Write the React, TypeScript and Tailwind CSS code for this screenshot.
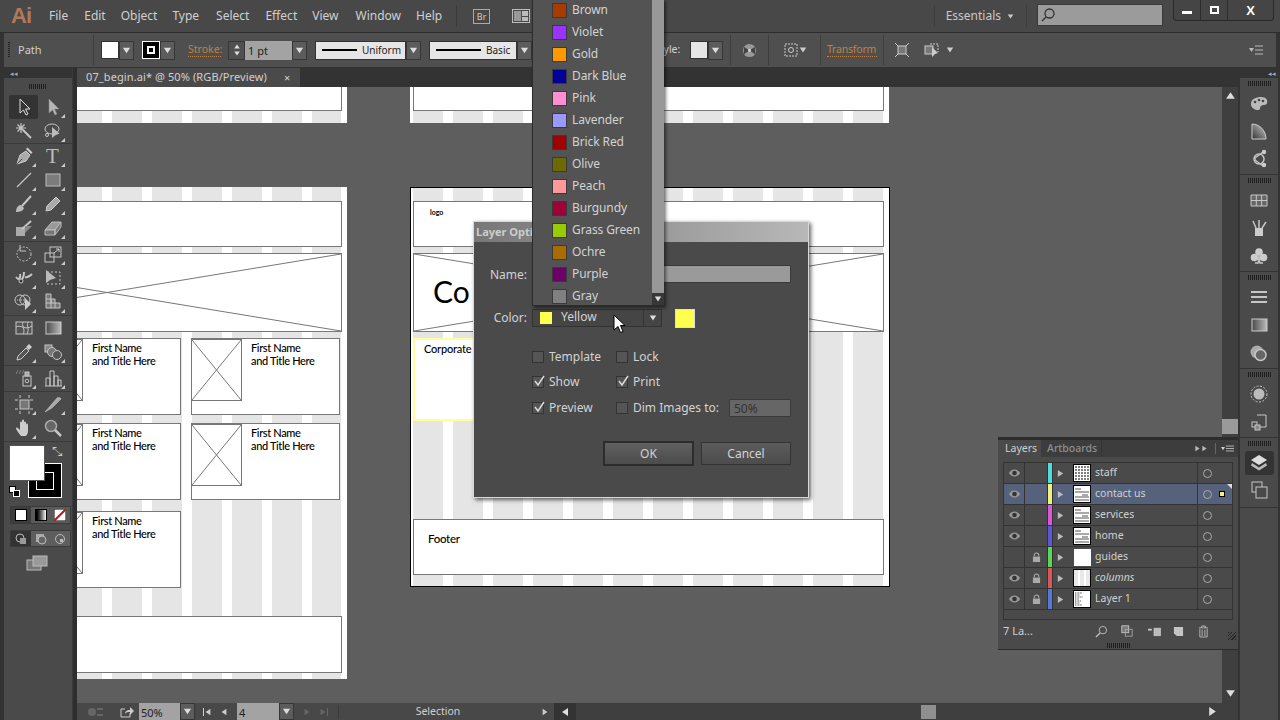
import React from 'react';

const UI = "font-['Noto_Sans',sans-serif]";

const Tri = ({ dir = 'down', className = 'w-2 h-2 text-[#ddd]' }: { dir?: 'down' | 'up' | 'left' | 'right'; className?: string }) => {
  const pts = { down: '1,2 9,2 5,8', up: '1,8 9,8 5,2', left: '8,1 8,9 2,5', right: '2,1 2,9 8,5' }[dir];
  return (
    <svg viewBox="0 0 10 10" className={`shrink-0 ${className}`}>
      <polygon points={pts} fill="currentColor" />
    </svg>
  );
};

const Drop = ({ className = 'w-[15px] h-[19px]' }: { className?: string }) => (
  <div className={`flex items-center justify-center bg-[#5c5c5c] border border-[#363636] shrink-0 ${className}`}>
    <Tri className="w-[9px] h-[9px] text-[#ddd]" />
  </div>
);

const Sep = ({ className = '' }: { className?: string }) => <div className={`w-px h-[30px] bg-[#3d3d3d] shrink-0 ${className}`} />;

const Grip = ({ w = 'w-[23px]' }: { w?: string }) => (
  <div className={`h-[5px] ${w} bg-[repeating-linear-gradient(90deg,#1f1f1f_0,#1f1f1f_1px,transparent_1px,transparent_2px)]`} />
);

// tool and panel icons, 20x20
const icons: Record<string, React.ReactNode> = {
  select: <path d="M6 2v14l3.5-3 2.5 5 2-1-2.5-5H16z" fill="#333" stroke="#ddd" />,
  direct: <path d="M6 2v14l3.5-3 2.5 5 2-1-2.5-5H16z" fill="#b5b5b5" stroke="#888" strokeWidth=".5" />,
  wand: <><path d="M9 9l8 8" strokeWidth="2" /><path d="M7 2v10M2 7h10M3.5 3.5l7 7M10.5 3.5l-7 7" strokeWidth="1.2" /></>,
  lasso: <><ellipse cx="9" cy="8" rx="7" ry="5" /><path d="M9 6v11l3-2.5 4.5-2z" fill="#bbb" stroke="none" /><circle cx="4" cy="14" r="1.5" /></>,
  pen: <><path d="M3 18l3-9 6-4 4 4-4 6z" fill="#aaa" stroke="#ccc" /><path d="M3 18l5-5" stroke="#444" /><path d="M12 3l1.5-1.5 5 5L17 8z" fill="#ccc" stroke="none" /></>,
  line: <path d="M3 17L17 3" strokeWidth="1.2" />,
  rect: <rect x="3" y="4" width="14" height="12" fill="#7c7c7c" stroke="#bbb" />,
  brush: <><path d="M8 12l9-10" strokeWidth="2" /><path d="M2 18c0-4 2-7 5-7l3 3c-1 3-4 4-8 4z" fill="#bbb" stroke="none" /></>,
  pencil: <path d="M3 17l1-5 9-9 4 4-9 9z" fill="#aaa" stroke="#ccc" />,
  blob: <><path d="M2 9h9v9H2z" fill="#aaa" stroke="none" /><path d="M8 11l9-8" strokeWidth="2" /><path d="M11 8l7 0-7 7z" fill="#888" stroke="none" /></>,
  eraser: <><path d="M2 12l7-8h9l-6 8z" fill="#999" stroke="#bbb" /><path d="M2 12h10v5H2zM12 12l6-8v5l-6 8z" fill="#777" stroke="#bbb" /></>,
  rotate: <><circle cx="10" cy="10" r="7" strokeDasharray="2 1.5" /><path d="M6 1v6h6" strokeWidth="1" /></>,
  scale: <><rect x="2" y="9" width="9" height="9" /><rect x="7" y="3" width="11" height="10" /><path d="M11 9l5-4M13 5h3v3" /></>,
  warp: <><path d="M2 9c3 4 5 1 4-3M10 4c0 5-2 8-4 9M11 9c3 1 5-1 7-3" strokeWidth="2" /><circle cx="7" cy="13" r="2" fill="#333" /></>,
  free: <><rect x="4" y="4" width="13" height="12" strokeDasharray="2 2" /><path d="M3 2v13l4-3 6-2z" fill="#bbb" stroke="none" /></>,
  shape: <><ellipse cx="6" cy="8" rx="5" ry="5" /><ellipse cx="11" cy="8" rx="5" ry="5" /><path d="M3 8h8" strokeDasharray="1 1" /><path d="M11 6v12l6-6z" fill="#ccc" stroke="none" /></>,
  persp: <path d="M3 2h5v5h4v4h5v5H3zM3 7h5v4h4v5M3 11h5v5M8 7v4" fill="#777" />,
  mesh: <><rect x="2" y="4" width="16" height="12" fill="#555" /><path d="M2 9c5-3 9 4 16-1M9 4c-2 3 3 8 0 12M14 4c-2 4 2 6-1 12" /></>,
  grad: <><defs><linearGradient id="g1"><stop offset="0" stopColor="#4a4a4a" /><stop offset="1" stopColor="#bbb" /></linearGradient></defs><rect x="3" y="4" width="15" height="12" fill="url(#g1)" stroke="#ccc" /></>,
  dropper: <><path d="M3 18l1-4 8-8 3 3-8 8z" stroke="#ccc" fill="#555" /><path d="M12 5l3-3 3 3-3 3z" fill="#ccc" stroke="none" /></>,
  blend: <><rect x="2" y="3" width="7" height="7" fill="#888" /><circle cx="9" cy="10" r="4.5" fill="#777" /><circle cx="14" cy="13" r="4.5" fill="#555" /></>,
  spray: <><path d="M2 5h.5M5 5h.5M8 5h.5M3 3h.5M6 3h.5M9 3h.5" strokeWidth="1.3" /><rect x="9" y="8" width="8" height="10" /><circle cx="13" cy="13" r="1.8" /><rect x="11" y="4" width="4" height="4" fill="#aaa" /></>,
  graph: <path d="M3 18V10h4v8M7 18V3h4v15M11 18V8h4v10M15 18v-6h3v6M2 18h17" />,
  board: <><rect x="6" y="6" width="9" height="9" fill="#777" /><path d="M4 6H1M4 15H1M19 6h-3M19 15h-3M6 4V1M15 4V1M6 20v-3M15 20v-3" /></>,
  slice: <path d="M2 18L14 4c2-1 4 0 4 1l-9 9z" fill="#aaa" stroke="#ccc" strokeWidth=".5" />,
  hand: <path d="M7 18c-2-3-5-6-5-8 1-1 2 0 4 2V5c0-2 2-2 2 0V3c0-2 2-2 2 0v2c0-2 2-2 2 0v2c0-2 2-2 2 0v6c0 2-1 4-2 5z" fill="#ccc" stroke="none" />,
  zoom: <><circle cx="8" cy="8" r="5.5" fill="#666" stroke="#aaa" strokeWidth="1.5" /><path d="M12 12l6 6" strokeWidth="2.5" /></>,
  palette: <><path d="M2 11c0-5 5-7 10-7s7 3 6 6-4 1-6 3 0 4-3 4-7-2-7-6z" fill="#bbb" stroke="none" /><circle cx="6" cy="9" r="1.3" fill="#444" stroke="none" /><circle cx="10" cy="7" r="1.3" fill="#444" stroke="none" /><circle cx="14" cy="8" r="1.3" fill="#444" stroke="none" /></>,
  guide: <><defs><linearGradient id="g2" x1="0" y1="1" x2="1" y2="0"><stop offset="0" stopColor="#333" /><stop offset="1" stopColor="#ccc" /></linearGradient></defs><path d="M3 3c8 0 14 7 14 15H3z" fill="url(#g2)" stroke="#ccc" /></>,
  kuler: <><path d="M14 3L6 9l0 2 8 6" strokeWidth="1.3" /><circle cx="10" cy="10" r="5" strokeWidth="1.5" /><circle cx="15" cy="3" r="2.2" fill="#ccc" stroke="none" /><circle cx="15" cy="16" r="2.2" fill="#ccc" stroke="none" /></>,
  swatches: <path d="M2 5h16v11H2zM2 10.500h16M7.300 5v11M12.600 5v11" fill="#666" />,
  brushes: <><rect x="6" y="10" width="8" height="8" fill="#ccc" stroke="none" /><path d="M7 10L4 3M10 10V2M13 10l4-6" strokeWidth="1.5" /></>,
  club: <><circle cx="10" cy="6" r="3.8" fill="#ccc" stroke="none" /><circle cx="5.500" cy="11.500" r="3.800" fill="#ccc" stroke="none" /><circle cx="14.500" cy="11.500" r="3.800" fill="#ccc" stroke="none" /><path d="M10 9l-1 8H6h8h-3z" fill="#ccc" /></>,
  lines: <path d="M2 5h16M2 10h16M2 15h16" strokeWidth="2.200" />,
  trans: <><circle cx="8" cy="9" r="6.500" fill="#aaa" stroke="none" /><circle cx="11.500" cy="12" r="5.500" fill="#666" strokeWidth="1.500" /></>,
  appear: <><circle cx="10" cy="10" r="8" strokeDasharray="2 1.500" /><circle cx="10" cy="10" r="5.500" fill="#bbb" stroke="none" /></>,
  transform: <><path d="M8 3h9v12H8" strokeWidth="1" /><rect x="3" y="10" width="5" height="5" /><rect x="6" y="13" width="5" height="5" fill="#888" /></>,
  layers: <><path d="M10 2l8 5-8 5-8-5z" fill="#ddd" stroke="none" /><path d="M3 10l7 4.500 7-4.500 1 2.500-8 5-8-5z" fill="#bbb" stroke="none" /></>,
  artboards: <><rect x="3" y="2" width="10" height="10" /><rect x="7" y="7" width="11" height="11" fill="#4a4a4a" /></>,
};

const Ico = ({ name, className = 'w-5 h-5' }: { name: string; className?: string }) => (
  <svg viewBox="0 0 20 20" className={`shrink-0 ${className}`} fill="none" stroke="#c6c6c6" strokeWidth="1">
    {icons[name]}
  </svg>
);

const ToolCell = ({ name, corner = true, active = false }: { name: string; corner?: boolean; active?: boolean }) => (
  <div className={`relative flex items-center justify-center w-[30px] h-[24px] ${active ? 'bg-[#333] rounded-[2px]' : ''}`}>
    {name === 'type' ? (
      <span className="font-['Liberation_Serif',serif] text-[21px] leading-none text-[#bdbdbd]">T</span>
    ) : (
      <Ico name={name} />
    )}
    {corner && (
      <svg viewBox="0 0 4 4" className="absolute right-[2px] bottom-[1px] w-1 h-1">
        <polygon points="4,0 4,4 0,4" fill="#ccc" />
      </svg>
    )}
  </div>
);

const toolGroups: [string, string][][] = [
  [['select', 'direct'], ['wand', 'lasso']],
  [['pen', 'type'], ['line', 'rect'], ['brush', 'pencil'], ['blob', 'eraser']],
  [['rotate', 'scale'], ['warp', 'free'], ['shape', 'persp']],
  [['mesh', 'grad'], ['dropper', 'blend']],
  [['spray', 'graph']],
  [['board', 'slice'], ['hand', 'zoom']],
];
const noCorner = ['select', 'wand', 'grad', 'mesh', 'zoom'];

const Tools = () => (
  <div className="w-[73px] pl-1 bg-[#333] shrink-0 h-full">
    <div className="h-full bg-[#4a4a4a] border-r border-[#3a3a3a]">
      <div className="h-[10px] bg-[#333] flex items-center pl-1.5">
        <span className="text-[7px] leading-none text-[#aaa]">◂◂</span>
      </div>
      <div className="h-[17px] flex justify-center pt-1.5"><Grip w="w-[18px]" /></div>
      {toolGroups.map((rows, g) => (
        <div key={g} className={`border-b border-[#3a3a3a] px-[5px] ${g === 0 ? '' : 'pb-px'}`}>
          {rows.map((r, i) => (
            <div key={i} className="flex">
              {r.map((n) => <ToolCell key={n} name={n} corner={!noCorner.includes(n)} active={n === 'select'} />)}
            </div>
          ))}
        </div>
      ))}
      {/* fill and stroke */}
      <div className="relative h-[60px]">
        <div className="absolute left-[24px] top-[21px] w-[34px] h-[35px] bg-black border border-white flex items-center justify-center">
          <div className="w-[18px] h-[18px] border border-white bg-black" />
        </div>
        <div className="absolute left-[5px] top-[3px] w-[36px] h-[36px] bg-white border border-[#555]" />
        <span className="absolute left-[48px] top-[1px] text-[13px] leading-4 text-[#ccc]">⤡</span>
        <div className="absolute left-[5px] top-[44px] w-[7px] h-[7px] bg-white border border-black" />
        <div className="absolute left-[9px] top-[48px] w-[7px] h-[7px] bg-black border border-white" />
      </div>
      <div className="ml-[6px] mr-[1px] mt-[4px] flex h-[18px] bg-[#3d3d3d] border border-[#3a3a3a]">
        <div className="flex-1 flex items-center justify-center"><div className="w-3 h-3 bg-white border border-black" /></div>
        <div className="flex-1 flex items-center justify-center bg-[#5a5a5a]"><div className="w-3 h-3 bg-gradient-to-r from-black to-white border border-black" /></div>
        <div className="flex-1 flex items-center justify-center bg-[#5a5a5a]">
          <svg viewBox="0 0 12 12" className="w-3 h-3"><rect width="12" height="12" fill="#fff" stroke="#000" /><path d="M0 12L12 0" stroke="#c01818" strokeWidth="2" /></svg>
        </div>
      </div>
      <div className="ml-[6px] mr-[1px] mt-[6px] flex h-[17px] border border-[#3a3a3a]">
        <div className="flex-1 flex items-center justify-center bg-[#333]"><svg viewBox="0 0 12 12" className="w-3 h-3"><circle cx="5" cy="5" r="4" fill="none" stroke="#bbb" /><rect x="5" y="5" width="6" height="6" fill="#999" /></svg></div>
        <div className="flex-1 flex items-center justify-center bg-[#5e5e5e]"><svg viewBox="0 0 12 12" className="w-3 h-3"><rect x="1" y="1" width="8" height="8" fill="#aaa" /><circle cx="7" cy="7" r="4" fill="#666" stroke="#bbb" /></svg></div>
        <div className="flex-1 flex items-center justify-center bg-[#5e5e5e]"><svg viewBox="0 0 12 12" className="w-3 h-3"><circle cx="6" cy="6" r="4.500" fill="none" stroke="#bbb" /><rect x="6" y="6" width="3" height="3" fill="#bbb" /></svg></div>
      </div>
      <div className="flex justify-center mt-[8px] mr-[2px]">
        <svg viewBox="0 0 22 16" className="w-[22px] h-4"><rect x="1" y="5" width="14" height="10" fill="#777" stroke="#bbb" /><rect x="7" y="1" width="14" height="10" fill="#999" stroke="#bbb" /></svg>
      </div>
    </div>
  </div>
);

const menu: [string, string][] = [
  ['File', 'ml-[20px]'], ['Edit', 'ml-[16px]'], ['Object', 'ml-[15px]'], ['Type', 'ml-[15px]'], ['Select', 'ml-[17px]'],
  ['Effect', 'ml-[16px]'], ['View', 'ml-[15px]'], ['Window', 'ml-[17px]'], ['Help', 'ml-[15px]'],
];

const MenuBar = () => (
  <div className="h-[33px] bg-[#484848] border-b border-[#2e2e2e] flex items-center pl-[11px] shrink-0 relative">
    <span className="w-[18px] font-['Liberation_Sans',sans-serif] font-bold text-[22px] tracking-[-1px] text-[#ad7a5c] leading-none">Ai</span>
    {menu.map(([m, c]) => <span key={m} className={`${c} text-[12px] text-[#d0d0d0]`}>{m}</span>)}
    <div className="w-px h-[22px] bg-[#3a3a3a] ml-[14px]" />
    <div className="ml-[16px] w-[17px] h-[15px] border border-[#aaa] flex items-center justify-center text-[9px] leading-none text-[#ccc]">Br</div>
    <div className="ml-[22px] w-[18px] h-[14px] border border-[#bbb] flex gap-px p-px">
      <div className="flex-1 bg-[#999]" />
      <div className="flex-1 flex flex-col gap-px"><div className="flex-1 bg-[#bbb]" /><div className="flex-1 bg-[#bbb]" /></div>
    </div>
    <div className="flex-1" />
    <div className="w-px h-[22px] bg-[#3d3d3d] mr-[11px]" />
    <span className="text-[12px] text-[#c8c8c8]">Essentials</span>
    <Tri className="w-[7px] h-[7px] text-[#ccc] ml-[6px]" />
    <div className="w-px h-[22px] bg-[#3d3d3d] ml-[12px]" />
    <div className="ml-[10px] w-[126px] h-[22px] bg-[#9b9b9b] border border-[#3a3a3a] flex items-center pl-0.5 mb-[2px]">
      <svg viewBox="0 0 16 16" className="w-4 h-4"><circle cx="9.500" cy="6.500" r="4.500" fill="none" stroke="#333" strokeWidth="1.300" /><path d="M6 10l-4 4" stroke="#333" strokeWidth="1.500" /></svg>
    </div>
    <div className="ml-[10px] mr-[6px] w-[101px] h-[21px] self-start flex border border-t-0 border-[#2a2a2a] rounded-b-[4px] bg-[#454545]">
      <div className="w-[27px] flex items-center justify-center border-r border-[#2c2c2c]"><div className="w-[10px] h-[3px] bg-white mt-[5px]" /></div>
      <div className="w-[27px] flex items-center justify-center border-r border-[#2c2c2c]"><div className="w-[9px] h-[8px] border-2 border-white" /></div>
      <div className="flex-1 flex items-center justify-center text-[13px] font-bold leading-none text-white font-['Liberation_Sans',sans-serif]">X</div>
    </div>
  </div>
);

const ControlBar = () => (
  <div className="h-[35px] px-1 bg-[#333] shrink-0">
    <div className="h-full bg-[#4f4f4f] border-b border-[#333] flex items-center text-[11px] text-[#d0d0d0]">
      <div className="ml-[4px] w-[2px] h-[16px] bg-[repeating-linear-gradient(180deg,#222_0,#222_1px,transparent_1px,transparent_2px)]" />
      <span className="ml-[8px] w-[75px]">Path</span>
      <Sep />
      <div className="ml-[7px] w-[18px] h-[18px] bg-white border border-[#333]" />
      <Drop />
      <div className="ml-[8px] w-[18px] h-[18px] bg-black border border-white flex items-center justify-center"><div className="w-[8px] h-[8px] border-2 border-white" /></div>
      <Drop />
      <span className="ml-[13px] w-[33px] text-[#bf8146] text-[10.500px] whitespace-nowrap border-b border-dotted border-[#bf8146] leading-[13px]">Stroke:</span>
      <div className="ml-[7px] w-[17px] h-[19px] bg-[#505050] border border-[#363636] flex flex-col items-center justify-center">
        <Tri dir="up" className="w-[8px] h-[7px] text-[#ddd]" /><Tri className="w-[8px] h-[7px] text-[#ddd]" />
      </div>
      <div className="w-[47px] h-[19px] bg-[#a3a3a3] text-[#222] pl-[3px] leading-[19px]">1 pt</div>
      <Drop />
      <div className="ml-[8px] w-[91px] h-[19px] bg-[#e6e6e6] border border-[#333] flex items-center pl-[6px] text-[10px] text-[#222]">
        <div className="w-[35px] h-[2px] bg-black mr-[5px]" />Uniform
      </div>
      <Drop />
      <div className="ml-[8px] w-[88px] h-[19px] bg-[#e6e6e6] border border-[#333] flex items-center pl-[6px] text-[10px] text-[#222]">
        <div className="w-[45px] h-[2px] bg-black mr-[5px]" />Basic
      </div>
      <Drop />
      <span className="ml-[122px] w-[36px] text-[10.500px]">Style:</span>
      <div className="w-[18px] h-[18px] bg-[#e6e6e6] border border-[#333]" />
      <Drop />
      <Sep className="ml-[7px]" />
      <svg viewBox="0 0 16 16" className="ml-[11px] w-[15px] h-[15px]"><circle cx="8" cy="8" r="7" fill="#999" /><path d="M8 8L2 4v8zM8 8l6-4v8z" fill="#444" /><circle cx="8" cy="8" r="1.500" fill="#ddd" /></svg>
      <Sep className="ml-[11px]" />
      <svg viewBox="0 0 14 14" className="ml-[15px] w-[14px] h-[14px]"><rect x="1" y="1" width="12" height="12" fill="none" stroke="#ccc" strokeDasharray="2 1" /><circle cx="7" cy="7" r="2.500" fill="none" stroke="#ccc" /></svg>
      <Tri className="w-2 h-2 text-[#ccc] ml-px" />
      <Sep className="ml-[13px]" />
      <span className="ml-[6px] w-[50px] text-[#bf8146] text-[10.500px] tracking-[-0.2px] border-b border-dotted border-[#bf8146] leading-[13px]">Transform</span>
      <Sep className="ml-[6px]" />
      <svg viewBox="0 0 16 16" className="ml-[10px] w-4 h-4"><rect x="4" y="4" width="8" height="8" fill="#777" stroke="#ccc" /><path d="M1 1l3 3M15 1l-3 3M1 15l3-3M15 15l-3-3" stroke="#ccc" /></svg>
      <svg viewBox="0 0 16 16" className="ml-[14px] w-4 h-4"><rect x="1" y="4" width="8" height="8" fill="#777" stroke="#ccc" /><path d="M6 2h8v8" fill="none" stroke="#ccc" strokeDasharray="2 1" /><path d="M8 5v10l3-3 3-1z" fill="#ccc" /></svg>
      <Tri className="w-2 h-2 text-[#ccc] ml-[6px]" />
      <div className="flex-1" />
      <svg viewBox="0 0 16 12" className="mr-[12px] w-4 h-3"><path d="M7 2h8M7 6h8M7 10h8" stroke="#bbb" /><polygon points="1,4 6,4 3.500,8" fill="#bbb" /></svg>
    </div>
  </div>
);

const Cross = () => (
  <svg className="absolute inset-0 w-full h-full" preserveAspectRatio="none" viewBox="0 0 100 100">
    <path d="M0 0L100 100M100 0L0 100" stroke="#777" strokeWidth="1" vectorEffect="non-scaling-stroke" fill="none" />
  </svg>
);

const wire = "font-['Lato',sans-serif] text-black";

const Card = ({ className }: { className: string }) => (
  <div className={`absolute bg-white border border-[#777] ${className}`}>
    <div className="absolute -left-px top-0 w-[51px] h-[62px] border border-[#777]"><Cross /></div>
    <div className={`absolute left-[59px] top-[2px] text-[11px] tracking-[-0.35px] font-medium leading-[13px] ${wire}`}>First Name<br />and Title Here</div>
  </div>
);

const Stripes = () => (
  <div className="absolute left-[3px] right-[6px] top-0 bottom-0 bg-[repeating-linear-gradient(90deg,#e5e5e5_0,#e5e5e5_30px,#fff_30px,#fff_40px)]" />
);

const Hero = ({ className }: { className: string }) => (
  <div className={`absolute bg-white border border-[#777] ${className}`}><Cross /></div>
);

const Canvas = () => (
  <div className="relative flex-1 bg-[#5e5e5e] overflow-hidden">
    {/* artboards above the fold */}
    <div className="absolute left-[-208px] top-[-60px] w-[478px] h-[96px] bg-white"><Stripes />
      <div className="absolute left-[3px] top-0 w-[470px] h-[84px] bg-white border border-[#777]" />
    </div>
    <div className="absolute left-[333px] top-[-60px] w-[479px] h-[96px] bg-white"><Stripes />
      <div className="absolute left-[3px] top-0 w-[471px] h-[84px] bg-white border border-[#777]" />
    </div>

    {/* left artboard */}
    <div className="absolute left-[-208px] top-[100px] w-[478px] h-[492px] bg-white">
      <Stripes />
      <div className="absolute left-[3px] top-[14px] w-[470px] h-[46px] bg-white border border-[#777]" />
      <Hero className="left-[3px] top-[66px] w-[470px] h-[79px]" />
      <Card className="left-[163px] top-[151px] w-[149px] h-[77px]" />
      <Card className="left-[322px] top-[151px] w-[149px] h-[77px]" />
      <Card className="left-[163px] top-[236px] w-[149px] h-[77px]" />
      <Card className="left-[322px] top-[236px] w-[149px] h-[77px]" />
      <Card className="left-[163px] top-[324px] w-[149px] h-[77px]" />
      <div className="absolute left-[3px] top-[429px] w-[470px] h-[57px] bg-white border border-[#777]" />
    </div>

    {/* center artboard */}
    <div className="absolute left-[333px] top-[100px] w-[480px] h-[400px] bg-white border border-black">
      <div className="absolute -left-px -right-px top-0 bottom-0">
        <Stripes />
        <div className="absolute left-[3px] top-[13px] w-[471px] h-[46px] bg-white border border-[#777]">
          <span className={`absolute left-[16px] top-[6px] text-[7px] font-bold leading-[9px] ${wire}`}>logo</span>
        </div>
        <Hero className="left-[3px] top-[65px] w-[471px] h-[79px]" />
        <span className={`absolute left-[23px] top-[83px] text-[30px] leading-10 ${wire}`}>Co</span>
        <div className="absolute left-[3px] top-[150px] w-[200px] h-[83px] bg-white border-2 border-[#ffff99]">
          <span className={`absolute left-[9px] top-[1px] text-[11px] tracking-[-0.2px] font-medium leading-[16px] ${wire}`}>Corporate</span>
        </div>
        <div className="absolute left-[3px] top-[331px] w-[471px] h-[56px] bg-white border border-[#777]">
          <span className={`absolute left-[14px] top-[11px] text-[11.500px] tracking-[-0.3px] font-medium leading-[16px] ${wire}`}>Footer</span>
        </div>
      </div>
    </div>
  </div>
);

const VScroll = () => (
  <div className="w-[16px] bg-[#3f3f3f] flex flex-col items-center shrink-0">
    <Tri dir="up" className="w-[11px] h-[11px] text-[#ddd] mt-[3px]" />
    <div className="mt-[318px] w-full h-[15px] bg-[#9a9a9a]" />
    <div className="flex-1" />
    <Tri className="w-[11px] h-[11px] text-[#ddd] mb-[4px]" />
  </div>
);

const StatusBar = () => (
  <div className="h-[17px] bg-[#484848] flex items-center text-[11px] text-[#d0d0d0] shrink-0">
    <svg viewBox="0 0 18 10" className="ml-[10px] w-[18px] h-[10px]"><circle cx="5" cy="5" r="4" fill="#666" /><path d="M10 2h6M10 8h6" stroke="#666" strokeWidth="2" /></svg>
    <svg viewBox="0 0 14 12" className="ml-[15px] w-[14px] h-3"><path d="M1 3h4M1 3v8h9V7" fill="none" stroke="#ccc" /><path d="M5 8c0-3 2-4 5-4V1l4 4-4 4V6c-2 0-4 0-5 2z" fill="#ccc" /></svg>
    <div className="ml-[5px] w-[41px] h-[17px] bg-[#a3a3a3] text-[#222] pl-[2px] leading-[19px]">50%</div>
    <Drop className="w-[15px] h-[17px]" />
    <div className="ml-[8px] w-[9px] flex items-center"><div className="w-px h-2 bg-[#ccc]" /><Tri dir="left" className="w-2 h-2 text-[#ccc]" /></div>
    <Tri dir="left" className="w-2 h-2 text-[#ccc] ml-[8px]" />
    <div className="ml-[9px] w-[42px] h-[17px] bg-[#a3a3a3] text-[#222] pl-[2px] leading-[19px]">4</div>
    <Drop className="w-[15px] h-[17px]" />
    <Tri dir="right" className="w-2 h-2 text-[#666] ml-[9px]" />
    <div className="ml-[8px] w-[9px] flex items-center"><Tri dir="right" className="w-2 h-2 text-[#666]" /><div className="w-px h-2 bg-[#666]" /></div>
    <div className="ml-[10px] w-px h-[14px] bg-[#3a3a3a]" />
    <span className="w-[198px] text-center text-[10.500px]">Selection</span>
    <Tri dir="right" className="w-2 h-2 text-[#ccc] ml-[4px]" />
    <div className="ml-[5px] w-[22px] h-[17px] bg-[#333] flex items-center justify-center"><Tri dir="left" className="w-2.5 h-2.5 text-[#ddd]" /></div>
    <div className="relative flex-1 h-[17px] bg-[#3f3f3f] flex items-center">
      <div className="absolute left-[345px] top-[2px] w-[15px] h-[14px] bg-[#8f8f8f]" />
      <div className="flex-1" />
      <Tri dir="right" className="w-[11px] h-[11px] text-[#ddd] mr-[20px]" />
    </div>
  </div>
);

const dockGroups: [string[], string][] = [
  [['palette', 'guide', 'kuler'], 'h-[97px]'],
  [['swatches', 'brushes', 'club'], 'h-[97px]'],
  [['lines', 'grad', 'trans'], 'h-[97px]'],
  [['appear', 'transform'], 'h-[69px]'],
];

const Dock = () => (
  <div className="w-[42px] bg-[#333] shrink-0 pl-[2px] pr-[2px] flex flex-col">
    <div className="h-[10px] flex items-center justify-end pr-0.5"><span className="text-[7px] leading-none text-[#aaa]">◂◂</span></div>
    {dockGroups.map(([list, h], i) => (
      <div key={i} className={`${h} bg-[#4a4a4a] border-b border-[#333] flex flex-col items-center pt-[3px]`}>
        <Grip />
        {list.map((n, j) => (
          <div key={n} className={`${j === 0 ? 'mt-[7px]' : 'mt-[8px]'}`}><Ico name={n} /></div>
        ))}
      </div>
    ))}
    <div className="h-[70px] bg-[#4a4a4a] border-b border-[#333] flex flex-col items-center pt-[3px]">
      <Grip />
      <div className="mt-[5px] w-[29px] h-[24px] rounded-[3px] bg-[#333] flex items-center justify-center"><Ico name="layers" /></div>
      <div className="mt-[5px]"><Ico name="artboards" /></div>
    </div>
    <div className="flex-1 bg-[#4a4a4a]" />
  </div>
);

const Tab = () => (
  <div className="h-[19px] bg-[#333] flex shrink-0">
    <div className="w-[223px] bg-[#4a4a4a] flex items-center text-[11px] text-[#d0d0d0] pl-[9px]">
      <span className="w-[198px] tracking-[0.1px]">07_begin.ai* @ 50% (RGB/Preview)</span>
      <span className="text-[11px] leading-none">×</span>
    </div>
  </div>
);

const colors: [string, string][] = [
  ['Brown', '#a83c00'], ['Violet', '#9933ff'], ['Gold', '#ff9900'], ['Dark Blue', '#000099'], ['Pink', '#ff8fd0'],
  ['Lavender', '#9999ff'], ['Brick Red', '#a00000'], ['Olive', '#6b6b00'], ['Peach', '#ff9999'], ['Burgundy', '#a00038'],
  ['Grass Green', '#99cc00'], ['Ochre', '#a86c00'], ['Purple', '#6b006b'], ['Gray', '#808080'],
];

const ColorList = () => (
  <div className="absolute left-[532px] top-[-1px] w-[132px] h-[307px] overflow-hidden bg-[#535353] border-l border-b border-[#2c2c2c] flex shadow-[2px_2px_3px_rgba(0,0,0,0.5)] z-20">
    <div className="flex-1">
      {colors.map(([n, c]) => (
        <div key={n} className="h-[22px] flex items-center pl-[19px] text-[12px] tracking-[-0.1px] text-[#d2d2d2]">
          <div className="w-[15px] h-[15px] border border-[#3a3a3a]" style={{ backgroundColor: c }} />
          <span className="ml-[5px]">{n}</span>
        </div>
      ))}
    </div>
    <div className="w-[12px] flex flex-col">
      <div className="flex-1 bg-[#989898]" />
      <div className="h-[12px] bg-[#373737] flex items-center justify-center"><Tri className="w-2 h-2 text-[#ddd]" /></div>
    </div>
  </div>
);

const Check = ({ label, on, w }: { label: string; on?: boolean; w: string }) => (
  <div className={`flex items-center ${w}`}>
    <div className="relative w-[12px] h-[12px] bg-[#555] border border-[#333]">
      {on && (
        <svg viewBox="0 0 12 12" className="absolute -top-0.5 left-0 w-[12px] h-[12px]"><path d="M2 6l3 4 6-9" fill="none" stroke="#e0e0e0" strokeWidth="1.400" /></svg>
      )}
    </div>
    <span className="ml-[5px]">{label}</span>
  </div>
);

const Dialog = () => (
  <div className="absolute left-[473px] top-[221px] w-[336px] h-[277px] z-10 bg-[#4a4a4a] border border-[#d8d8d8] shadow-[2px_2px_4px_rgba(0,0,0,0.6)] text-[12px] text-[#d2d2d2]">
    <div className="h-[20px] bg-gradient-to-r from-[#777] to-[#b8b8b8] pl-[2px] text-[11px] font-bold leading-[20px] text-[#ccc]">Layer Options</div>
    <div className="mt-[23px] flex items-center h-[18px]">
      <span className="w-[53px] text-right mt-[2px]">Name:</span>
      <div className="ml-[5px] w-[259px] h-[18px] bg-[#9a9a9a] border border-[#3a3a3a]" />
    </div>
    <div className="mt-[26px] flex items-center h-[18px]">
      <span className="w-[53px] text-right">Color:</span>
      <div className="ml-[5px] w-[130px] h-[18px] bg-[#454545] border border-[#333] flex items-center pl-[7px]">
        <div className="w-[12px] h-[12px] bg-[#ffff4d]" />
        <span className="ml-[9px] leading-4 mb-0.5">Yellow</span>
        <div className="flex-1" />
        <div className="w-px h-[16px] bg-[#333]" />
        <div className="w-[17px] flex justify-center"><Tri className="w-2 h-2 text-[#ddd]" /></div>
      </div>
      <div className="ml-[13px] w-[20px] h-[19px] bg-[#ffff4d] border border-[#ddd]" />
    </div>
    <div className="pl-[58px]">
      <div className="mt-[21px] flex items-center h-[18px]">
        <Check label="Template" w="w-[84px]" /><Check label="Lock" w="w-[84px]" />
      </div>
      <div className="mt-[7px] flex items-center h-[18px]">
        <Check label="Show" on w="w-[84px]" /><Check label="Print" on w="w-[84px]" />
      </div>
      <div className="mt-[8px] flex items-center h-[18px]">
        <Check label="Preview" on w="w-[84px]" /><Check label="Dim Images to:" w="w-[113px]" />
        <div className="w-[62px] h-[18px] bg-[#666] border border-[#3a3a3a] pl-1 text-[#333] leading-[17px]">50%</div>
      </div>
    </div>
    <div className="mt-[24px] flex items-center justify-end gap-[7px] pr-[17px]">
      <div className="w-[91px] h-[25px] border-2 border-[#2c2c2c] bg-gradient-to-b from-[#606060] to-[#4c4c4c] flex items-center justify-center">OK</div>
      <div className="w-[90px] h-[23px] border border-[#333] bg-gradient-to-b from-[#5c5c5c] to-[#4c4c4c] flex items-center justify-center">Cancel</div>
    </div>
  </div>
);

const Thumb = ({ kind }: { kind: string }) => {
  if (kind === 'guides') return <div className="w-[17px] h-[17px] bg-white" />;
  if (kind === 'columns') {
    return <div className="w-[18px] h-[18px] border border-black bg-[repeating-linear-gradient(90deg,#e8e8e8_0,#e8e8e8_4px,#fff_4px,#fff_6px)]" />;
  }
  return (
    <svg viewBox="0 0 18 18" className="w-[18px] h-[18px]">
      <rect x=".5" y=".5" width="17" height="17" fill="#fff" stroke="#000" />
      {kind === 'layer' ? (
        <path d="M2 3h7M2 5h5M2 7h8M2 9h4M2 11h6M2 13h5M2 15h7" stroke="#444" strokeDasharray="1 .6" />
      ) : kind === 'staff' ? (
        <path d="M2 3h14M2 6h14M2 9h14M2 12h14M2 15h14" stroke="#555" strokeWidth="1.300" strokeDasharray="2 1" />
      ) : (
        <path d="M2 4h6M2 7h14M9 10h6M2 12h14M2 15h14" stroke="#555" />
      )}
    </svg>
  );
};

const layers = [
  { name: 'staff', bar: '#4fdcdc', eye: true, thumb: 'staff' },
  { name: 'contact us', bar: '#f2f27a', eye: true, thumb: 'contact', sel: true },
  { name: 'services', bar: '#d858d8', eye: true, thumb: 'contact' },
  { name: 'home', bar: '#5858d8', eye: true, thumb: 'contact' },
  { name: 'guides', bar: '#58d858', lock: true, thumb: 'guides' },
  { name: 'columns', bar: '#d85858', eye: true, lock: true, thumb: 'columns', italic: true },
  { name: 'Layer 1', bar: '#5878d8', eye: true, lock: true, thumb: 'layer' },
];

const Eye = () => (
  <svg viewBox="0 0 14 10" className="w-[13px] h-[10px]"><path d="M1 5c3-5 9-5 12 0-3 5-9 5-12 0z" fill="#999" /><circle cx="7" cy="5" r="2.500" fill="#333" /></svg>
);
const Lock = () => (
  <svg viewBox="0 0 10 12" className="w-[9px] h-[11px]"><path d="M2.500 5V3.500a2.500 2.500 0 0 1 5 0V5" fill="none" stroke="#aaa" strokeWidth="1.200" /><rect x="1" y="5" width="8" height="6" fill="#aaa" /></svg>
);

const LayersPanel = () => (
  <div className="absolute left-[998px] top-[437px] w-[240px] h-[213px] z-10 bg-[#4a4a4a] border-t-[3px] border-b border-[#2c2c2c] text-[#d0d0d0]">
    <div className="h-[17px] bg-[#3d3d3d] flex items-center text-[10.500px]">
      <div className="w-[43px] h-full bg-[#4a4a4a] flex items-center pl-[7px]">Layers</div>
      <div className="w-[61px] h-full flex items-center pl-[6px] border-r border-[#333] text-[#8e8e8e] font-medium">Artboards</div>
      <div className="flex-1" />
      <div className="flex mr-[7px]"><Tri dir="right" className="w-[7px] h-[9px] text-[#bbb]" /><Tri dir="right" className="w-[7px] h-[9px] text-[#bbb]" /></div>
      <div className="w-px h-[11px] bg-[#666]" />
      <svg viewBox="0 0 16 8" className="ml-[5px] mr-[4px] w-[13px] h-[7px]"><path d="M6 1h10M6 4h10M6 7h10" stroke="#ccc" /><polygon points="0,2 5,2 2.500,6" fill="#ccc" /></svg>
    </div>
    <div className="mx-[5px] mt-[5px] w-[230px] h-[158px] border border-[#333]">
      {layers.map((l) => (
        <div key={l.name} className={`relative h-[21px] flex items-center border-b border-[#333] ${l.sel ? 'bg-[#56627c]' : ''}`}>
          <div className="w-[21px] h-full flex items-center justify-center border-r border-[#333]">{l.eye && <Eye />}</div>
          <div className="w-[22px] h-full flex items-center justify-center">{l.lock && <Lock />}</div>
          <div className="w-[6px] h-full border-x border-[#333]" style={{ backgroundColor: l.bar }} />
          <Tri dir="right" className="ml-[3px] w-[9px] h-[9px] text-[#bbb]" />
          <div className="ml-[8px] w-[18px] flex justify-center"><Thumb kind={l.thumb} /></div>
          <span className={`ml-[4px] w-[102px] text-[10.500px] ${l.italic ? 'italic' : ''}`}>{l.name}</span>
          <div className="h-full border-l border-[#333] pl-[5px] flex items-center">
            <div className="w-[9px] h-[9px] rounded-full border border-[#aaa]" />
            {l.sel && <div className="ml-[7px] w-[6px] h-[6px] bg-[#f2f27a] border border-black" />}
          </div>
          {l.sel && (
            <svg viewBox="0 0 5 5" className="absolute top-0 right-0 w-[5px] h-[5px]"><polygon points="0,0 5,0 5,5" fill="#ddd" /></svg>
          )}
        </div>
      ))}
    </div>
    <div className="h-[22px] flex items-center pl-[5px] text-[11px]">
      <span className="w-[92px]">7 La...</span>
      <svg viewBox="0 0 14 14" className="w-[13px] h-[13px]"><circle cx="8.500" cy="5.500" r="4" fill="none" stroke="#bbb" /><path d="M5.500 8.500L1 13" stroke="#bbb" strokeWidth="1.500" /></svg>
      <svg viewBox="0 0 14 14" className="ml-[13px] w-[12px] h-[12px]"><rect x="1" y="1" width="8" height="8" fill="#777" stroke="#ccc" /><rect x="5" y="5" width="8" height="8" fill="none" stroke="#aaa" /></svg>
      <svg viewBox="0 0 16 12" className="ml-[14px] w-[15px] h-[11px]"><path d="M1 3h4v2H1z" fill="#ccc" /><rect x="7" y="2" width="8" height="9" fill="#bbb" /></svg>
      <svg viewBox="0 0 12 12" className="ml-[11px] w-[11px] h-[11px]"><path d="M1 1h10v10H4L1 8z" fill="#c4c4c4" /></svg>
      <svg viewBox="0 0 12 14" className="ml-[14px] w-[11px] h-[13px]"><path d="M1 3h10M4 3V1h4v2M2 4v9h8V4M4.500 5v7M7.500 5v7" fill="none" stroke="#bbb" /></svg>
      <div className="flex-1" />
      <div className="w-[8px] h-[8px] mr-[2px] self-end mb-0.5 bg-[repeating-linear-gradient(135deg,#222_0,#222_1px,transparent_1px,transparent_2.500px)]" />
    </div>
    <div className="mt-px h-[6px] flex justify-center"><Grip /></div>
  </div>
);

const Cursor = () => (
  <svg viewBox="0 0 14 20" className="absolute left-[613px] top-[314px] w-[14px] h-[20px] z-30">
    <path d="M1 1v15l4-3.500 2.500 6 2.500-1-2.500-6H12z" fill="#fff" stroke="#000" />
  </svg>
);

export default function App() {
  return (
    <div className={`relative w-[1280px] h-[720px] overflow-hidden flex flex-col bg-[#333] ${UI}`}>
      <MenuBar />
      <ControlBar />
      <div className="flex-1 flex min-h-0">
        <Tools />
        <div className="flex-1 flex flex-col min-w-0 pl-[4px] bg-[#2e2e2e]">
          <Tab />
          <div className="flex-1 flex min-h-0">
            <Canvas />
            <VScroll />
          </div>
          <StatusBar />
        </div>
        <Dock />
      </div>
      <Dialog />
      <ColorList />
      <LayersPanel />
      <Cursor />
    </div>
  );
}
